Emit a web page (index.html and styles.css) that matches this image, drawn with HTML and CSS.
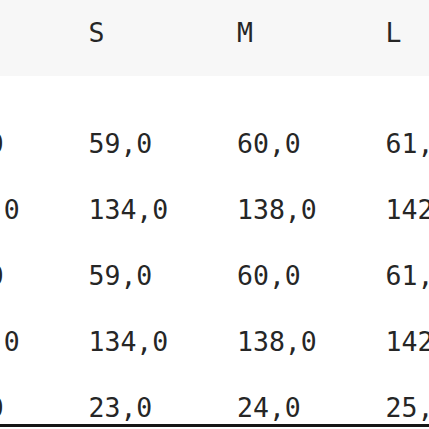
FILE: index.html
```html
<!DOCTYPE html>
<html>
<head>
<meta charset="utf-8">
<link rel="stylesheet" href="styles.css">
</head>
<body>
<div class="page">
  <div class="table">
    <div class="row head">
      <div class="cell"></div><div class="cell">S</div><div class="cell">M</div><div class="cell">L</div>
    </div>
    <div class="body">
      <div class="row"><div class="cell">58,0</div><div class="cell">59,0</div><div class="cell">60,0</div><div class="cell">61,0</div></div>
      <div class="row"><div class="cell">130,0</div><div class="cell">134,0</div><div class="cell">138,0</div><div class="cell">142,0</div></div>
      <div class="row"><div class="cell">58,0</div><div class="cell">59,0</div><div class="cell">60,0</div><div class="cell">61,0</div></div>
      <div class="row"><div class="cell">130,0</div><div class="cell">134,0</div><div class="cell">138,0</div><div class="cell">142,0</div></div>
      <div class="row"><div class="cell">22,0</div><div class="cell">23,0</div><div class="cell">24,0</div><div class="cell">25,0</div></div>
    </div>
  </div>
</div>
</body>
</html>
```

FILE: styles.css
```css
html, body {
  margin: 0;
  padding: 0;
  background: #ffffff;
}
.page {
  width: 429px;
  height: 427px;
  overflow: hidden;
  border-bottom: 3px solid #161616;
  box-sizing: border-box;
  background: #ffffff;
}
.table {
  font-family: "DejaVu Sans Mono", "Liberation Mono", monospace;
  font-size: 26.5px;
  color: #262626;
}
.row {
  display: grid;
  grid-template-columns: repeat(4, 148.5px);
  margin-left: -60px;
  height: 66px;
  line-height: 66px;
  white-space: nowrap;
}
.head {
  background: #f7f7f7;
  height: 76px;
  padding-bottom: 10px;
  box-sizing: border-box;
}
.body {
  padding-top: 35px;
}
```
